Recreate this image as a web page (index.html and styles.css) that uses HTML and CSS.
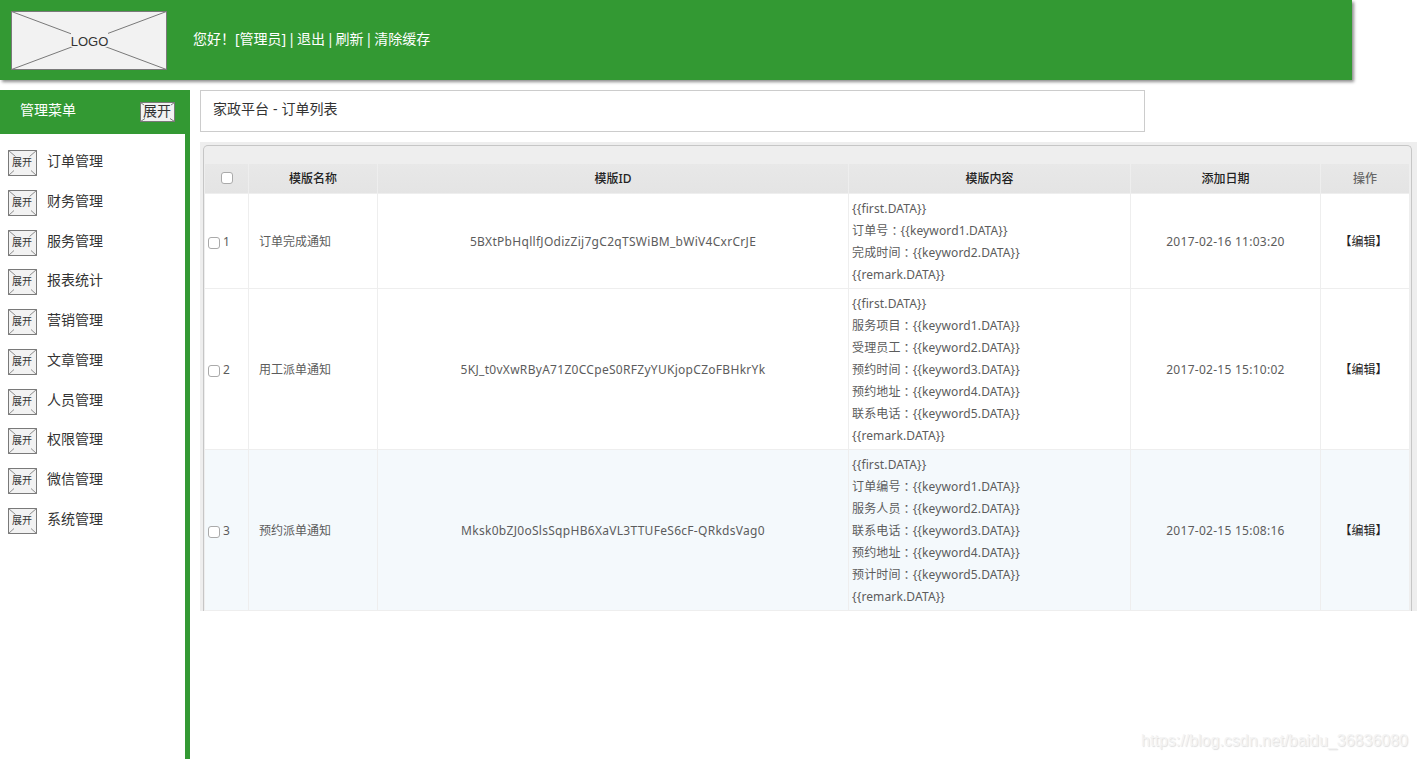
FILE: index.html
```html
<!DOCTYPE html>
<html lang="zh-CN">
<head>
    <meta charset="UTF-8">
    <meta name="viewport" content="width=device-width, initial-scale=1.0">
    <title>家政平台 - 订单列表</title>
    <link rel="stylesheet" href="styles.css">
</head>
<body>

    <svg class="defs" width="0" height="0">
        <symbol id="expand" viewBox="0 0 29 26">
            <rect x="0.5" y="0.5" width="28" height="25" fill="#f2f2f2" stroke="#797979"/>
            <path d="M0.5 0.5L7.5 6.5M28.5 0.5L21.5 6.5M0.5 25.5L6 20.5M28.5 25.5L23 20.5" stroke="#8c8c8c"/>
        </symbol>
    </svg>

    <!-- Header -->
    <div class="header">
        <svg class="logo" width="156" height="59" viewBox="0 0 156 59">
            <rect x="0.5" y="0.5" width="155" height="58" fill="#f2f2f2" stroke="#797979"/>
            <path d="M0.5 0.5L155.5 58.5M155.5 0.5L0.5 58.5" stroke="#797979"/>
            <rect x="60" y="22" width="37" height="14" fill="#f2f2f2"/>
            <text x="78.5" y="35" class="logo-text">LOGO</text>
        </svg>
        <div class="user-links">您好！[管理员] | 退出 | 刷新 | 清除缓存</div>
    </div>

    <div class="page">
        <!-- Sidebar -->
        <div class="sidebar">
            <div class="menu-title">
                <span>管理菜单</span>
                <svg width="35" height="20" viewBox="0 0 35 20">
                    <rect x="0.5" y="0.5" width="34" height="19" fill="#f2f2f2" stroke="#797979"/>
                    <path d="M0.5 0.5L4 3M34.5 0.5L31 3M0.5 19.5L5 16.5M34.5 19.5L30 16.5" stroke="#797979"/>
                    <text x="17" y="14" class="title-icon-text">展开</text>
                </svg>
            </div>
            <ul class="menu">
                <li><svg width="29" height="26"><use href="#expand"/><text x="14" y="16">展开</text></svg><span>订单管理</span></li>
                <li><svg width="29" height="26"><use href="#expand"/><text x="14" y="16">展开</text></svg><span>财务管理</span></li>
                <li><svg width="29" height="26"><use href="#expand"/><text x="14" y="16">展开</text></svg><span>服务管理</span></li>
                <li><svg width="29" height="26"><use href="#expand"/><text x="14" y="16">展开</text></svg><span>报表统计</span></li>
                <li><svg width="29" height="26"><use href="#expand"/><text x="14" y="16">展开</text></svg><span>营销管理</span></li>
                <li><svg width="29" height="26"><use href="#expand"/><text x="14" y="16">展开</text></svg><span>文章管理</span></li>
                <li><svg width="29" height="26"><use href="#expand"/><text x="14" y="16">展开</text></svg><span>人员管理</span></li>
                <li><svg width="29" height="26"><use href="#expand"/><text x="14" y="16">展开</text></svg><span>权限管理</span></li>
                <li><svg width="29" height="26"><use href="#expand"/><text x="14" y="16">展开</text></svg><span>微信管理</span></li>
                <li><svg width="29" height="26"><use href="#expand"/><text x="14" y="16">展开</text></svg><span>系统管理</span></li>
            </ul>
        </div>

        <!-- Content -->
        <div class="main">
            <div class="breadcrumb">家政平台 - 订单列表</div>

            <div class="panel">
                <div class="panel-inner">
                    <table>
                        <colgroup>
                            <col class="col-check">
                            <col class="col-name">
                            <col class="col-id">
                            <col class="col-content">
                            <col class="col-date">
                            <col class="col-action">
                        </colgroup>
                        <thead>
                            <tr>
                                <th><input type="checkbox"></th>
                                <th>模版名称</th>
                                <th>模版ID</th>
                                <th>模版内容</th>
                                <th>添加日期</th>
                                <th class="muted">操作</th>
                            </tr>
                        </thead>
                        <tbody>
                            <tr>
                                <td class="check"><label><input type="checkbox">1</label></td>
                                <td class="name">订单完成通知</td>
                                <td class="id">5BXtPbHqllfJOdizZij7gC2qTSWiBM_bWiV4CxrCrJE</td>
                                <td class="content">
                                    {{first.DATA}}<br>
                                    订单号<span class="colon" lang="zh-TW">：</span>{{keyword1.DATA}}<br>
                                    完成时间<span class="colon" lang="zh-TW">：</span>{{keyword2.DATA}}<br>
                                    {{remark.DATA}}
                                </td>
                                <td class="date">2017-02-16 11:03:20</td>
                                <td class="action">【编辑】</td>
                            </tr>
                            <tr>
                                <td class="check"><label><input type="checkbox">2</label></td>
                                <td class="name">用工派单通知</td>
                                <td class="id">5KJ_t0vXwRByA71Z0CCpeS0RFZyYUKjopCZoFBHkrYk</td>
                                <td class="content">
                                    {{first.DATA}}<br>
                                    服务项目<span class="colon" lang="zh-TW">：</span>{{keyword1.DATA}}<br>
                                    受理员工<span class="colon" lang="zh-TW">：</span>{{keyword2.DATA}}<br>
                                    预约时间<span class="colon" lang="zh-TW">：</span>{{keyword3.DATA}}<br>
                                    预约地址<span class="colon" lang="zh-TW">：</span>{{keyword4.DATA}}<br>
                                    联系电话<span class="colon" lang="zh-TW">：</span>{{keyword5.DATA}}<br>
                                    {{remark.DATA}}
                                </td>
                                <td class="date">2017-02-15 15:10:02</td>
                                <td class="action">【编辑】</td>
                            </tr>
                            <tr class="active">
                                <td class="check"><label><input type="checkbox">3</label></td>
                                <td class="name">预约派单通知</td>
                                <td class="id">Mksk0bZJ0oSlsSqpHB6XaVL3TTUFeS6cF-QRkdsVag0</td>
                                <td class="content">
                                    {{first.DATA}}<br>
                                    订单编号<span class="colon" lang="zh-TW">：</span>{{keyword1.DATA}}<br>
                                    服务人员<span class="colon" lang="zh-TW">：</span>{{keyword2.DATA}}<br>
                                    联系电话<span class="colon" lang="zh-TW">：</span>{{keyword3.DATA}}<br>
                                    预约地址<span class="colon" lang="zh-TW">：</span>{{keyword4.DATA}}<br>
                                    预计时间<span class="colon" lang="zh-TW">：</span>{{keyword5.DATA}}<br>
                                    {{remark.DATA}}
                                </td>
                                <td class="date">2017-02-15 15:08:16</td>
                                <td class="action">【编辑】</td>
                            </tr>
                        </tbody>
                    </table>
                </div>
            </div>
        </div>
    </div>

    <div class="watermark">https://blog.csdn.net/baidu_36836080</div>

</body>
</html>
```
FILE: styles.css
```css
/* General page styles */
* {
    box-sizing: border-box;
}

body {
    margin: 0;
    height: 759px;
    overflow: hidden;
    background-color: #fff;
    color: #333;
    font-family: 'Noto Sans', 'Noto Sans CJK SC', sans-serif;
    font-size: 14px;
}

svg {
    display: block;
    flex: none;
}

.defs {
    position: absolute;
}

/* Header */
.header {
    display: flex;
    width: 1352px;
    height: 80px;
    padding: 11px;
    background-color: #339933;
    box-shadow: 2px 2px 3px rgba(0, 0, 0, 0.45);
}

.logo-text {
    font-family: 'Liberation Sans', Arial, sans-serif;
    font-size: 13px;
    text-anchor: middle;
    fill: #333;
}

.user-links {
    margin: 17px 0 0 26px;
    line-height: 22px;
    color: #fff;
    white-space: nowrap;
    word-spacing: -2.15px;
}

.page {
    display: flex;
    gap: 10px;
    height: 669px;
    margin-top: 10px;
}

/* Sidebar */
.sidebar {
    flex: none;
    width: 190px;
    border-right: 5px solid #339933;
}

.menu-title {
    display: flex;
    justify-content: space-between;
    width: 190px;
    height: 44px;
    padding: 12px 15px 0 20px;
    background-color: #339933;
    color: #fff;
    line-height: 16px;
}

.title-icon-text {
    font-size: 14px;
    text-anchor: middle;
    fill: #333;
}

.menu {
    list-style: none;
    margin: 0;
    padding: 16px 0 0 8px;
}

.menu li {
    display: flex;
    gap: 10px;
    height: 39.75px;
    line-height: 22px;
}

.menu text {
    font-size: 10px;
    text-anchor: middle;
    fill: #333;
}

/* Content */
.main {
    flex: 1;
}

.breadcrumb {
    width: 945px;
    height: 42px;
    padding: 7px 12px;
    border: 1px solid #ccc;
    line-height: 22px;
    word-spacing: 0.3px;
}

.panel {
    height: 469px;
    margin-top: 10px;
    padding: 3px 5px 0 3px;
    background-color: #eee;
}

.panel-inner {
    height: 466px;
    padding: 18px 1px 0;
    border: 1px solid #c6c6c6;
    border-bottom: none;
    border-radius: 5px 5px 0 0;
}

/* Table */
table {
    width: 1205px;
    table-layout: fixed;
    border-collapse: separate;
    border-spacing: 0;
    font-size: 12px;
    line-height: 22px;
    color: #5c5c5c;
}

.col-check { width: 44px; }
.col-name { width: 129px; }
.col-id { width: 471px; }
.col-content { width: 282px; }
.col-date { width: 190px; }
.col-action { width: 89px; }

th,
td {
    padding: 4px 3px 2px;
    border-right: 1px solid #eee;
    border-bottom: 1px solid #eee;
    text-align: center;
    white-space: nowrap;
}

th {
    height: 30px;
    padding: 3px;
    background: linear-gradient(#e8e8e8, #e4e4e4);
    color: #222;
    font-weight: 500;
}

th.muted {
    color: #666;
}

td {
    background-color: #fff;
}

.active td {
    background-color: #f4f9fc;
}

td.name {
    padding-left: 10px;
    text-align: left;
}

td.id {
    letter-spacing: 0.29px;
}

td.content {
    text-align: left;
    letter-spacing: 0.13px;
}

td.date {
    letter-spacing: 0.27px;
}

td.action {
    padding-right: 6px;
    color: #222;
}

/* Full-width colon, centred in its cell */
.colon {
    font-family: 'Noto Sans CJK TC', sans-serif;
    line-height: 0;
    vertical-align: -1px;
}

.check label {
    display: flex;
    gap: 3px;
}

input {
    appearance: none;
    display: block;
    width: 12px;
    height: 12px;
    margin: 0 auto 1px;
    border: 1px solid #aaa;
    border-radius: 3px;
    background-color: #fff;
}

.check input {
    margin: 6px 0 0;
}

/* Watermark */
.watermark {
    position: absolute;
    right: 9px;
    bottom: 8px;
    font-family: 'Liberation Sans', Arial, sans-serif;
    font-size: 16px;
    line-height: 20px;
    color: #f4f4f4;
    text-shadow: 1px 1px 1px #dedede;
}
```
